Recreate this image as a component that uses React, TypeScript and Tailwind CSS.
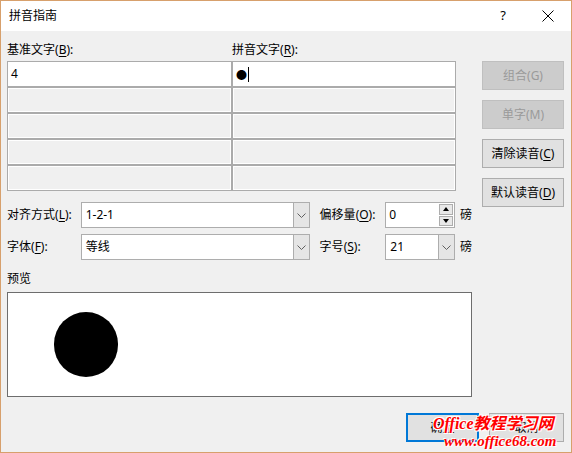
import React from 'react';

const Chevron = () => (
  <svg width="9" height="5" viewBox="0 0 9 5" fill="none">
    <path d="M0.5 0.5 L4.5 4.5 L8.5 0.5" stroke="#606060" strokeWidth="1" />
  </svg>
);

const Key = ({ k }: { k: string }) => (
  <>
    (<span className="underline underline-offset-2">{k}</span>)
  </>
);

const ComboBox = ({ value, width }: { value: string; width: string }) => (
  <div className={`${width} h-[26px] flex border border-[#adadad] bg-white`}>
    <div className="flex-1 pl-[4px] flex items-center">{value}</div>
    <div className="w-[16px] bg-[#e5e5e5] border-l border-[#adadad] flex items-center justify-center">
      <Chevron />
    </div>
  </div>
);

const SideButton = ({ children, disabled }: { children: React.ReactNode; disabled?: boolean }) => (
  <button
    className={`w-[82px] h-[29px] border flex items-center justify-center ${
      disabled ? 'bg-[#cccccc] border-[#bfbfbf] text-[#9a9a9a]' : 'bg-[#e1e1e1] border-[#adadad] text-black'
    }`}
  >
    {children}
  </button>
);

const App = () => {
  const emptyRows = [1, 2, 3, 4];

  return (
    <div className="relative w-[572px] h-[453px] border border-[#d7a06c] flex flex-col text-[12px] text-black font-['Noto_Sans','Noto_Sans_CJK_SC',sans-serif] overflow-hidden">
      {/* title bar */}
      <div className="h-[30px] bg-white flex items-center shrink-0">
        <span className="pl-[8px] flex-1">拼音指南</span>
        <span className="text-[13px] mr-[36px]">?</span>
        <svg width="12" height="12" viewBox="0 0 12 12" className="mr-[17px]">
          <path d="M0.5 0.5 L11.5 11.5 M11.5 0.5 L0.5 11.5" stroke="#000" strokeWidth="1" />
        </svg>
      </div>

      {/* body */}
      <div className="flex-1 bg-[#f0f0f0] pl-[6px] pr-[7px] flex flex-col">
        <div className="flex">
          <div className="w-[465px] flex flex-col">
            <div className="pt-[10px] h-[26px] grid grid-cols-[225px_1fr] items-center">
              <span>
                基准文字<Key k="B" />:
              </span>
              <span>
                拼音文字<Key k="R" />:
              </span>
            </div>

            <div className="mt-[4px] w-[449px] grid grid-cols-[223px_222px] gap-[2px] p-[1px] bg-[#ababab]">
              <div className="h-[24px] bg-white flex items-center pl-[3px]">4</div>
              <div className="h-[24px] bg-white flex items-center pl-[3px]">
                <span className="text-[11px] leading-none">●</span>
                <span className="ml-[1px] w-px h-[15px] bg-black" />
              </div>
              {emptyRows.map(r => (
                <React.Fragment key={r}>
                  <div className="h-[24px] bg-[#f0f0f0] border border-white" />
                  <div className="h-[24px] bg-[#f0f0f0] border border-white" />
                </React.Fragment>
              ))}
            </div>

            <div className="mt-[11px] flex items-center">
              <span className="w-[74px]">
                对齐方式<Key k="L" />:
              </span>
              <ComboBox value="1-2-1" width="w-[230px]" />
              <span className="ml-[10px] w-[66px]">
                偏移量<Key k="O" />:
              </span>
              <div className="w-[70px] h-[26px] flex border border-[#adadad] bg-white">
                <div className="flex-1 pl-[3px] flex items-center">0</div>
                <div className="w-[16px] flex flex-col p-[1px] gap-[1px]">
                  <div className="flex-1 bg-[#e8e8e8] border border-[#adadad] flex items-center justify-center">
                    <svg width="6" height="4" viewBox="0 0 6 4">
                      <path d="M0 4 L3 0 L6 4 Z" fill="#000" />
                    </svg>
                  </div>
                  <div className="flex-1 bg-[#e8e8e8] border border-[#adadad] flex items-center justify-center">
                    <svg width="6" height="4" viewBox="0 0 6 4">
                      <path d="M0 0 L3 4 L6 0 Z" fill="#000" />
                    </svg>
                  </div>
                </div>
              </div>
              <span className="ml-[5px]">磅</span>
            </div>

            <div className="mt-[6px] flex items-center">
              <span className="w-[74px]">
                字体<Key k="F" />:
              </span>
              <ComboBox value="等线" width="w-[230px]" />
              <span className="ml-[10px] w-[66px]">
                字号<Key k="S" />:
              </span>
              <ComboBox value="21" width="w-[70px]" />
              <span className="ml-[5px]">磅</span>
            </div>

            <div className="mt-[11px] h-[16px] flex items-center">预览</div>

            <div className="mt-[5px] h-[105px] bg-white border border-[#6d6d6d] flex items-center pl-[46px]">
              <div className="w-[64px] h-[65px] rounded-full bg-black" />
            </div>
          </div>

          <div className="ml-[10px] pt-[30px] flex flex-col gap-[10px]">
            <SideButton disabled>
              组合(G)
            </SideButton>
            <SideButton disabled>
              单字(M)
            </SideButton>
            <SideButton>
              清除读音<Key k="C" />
            </SideButton>
            <SideButton>
              默认读音<Key k="D" />
            </SideButton>
          </div>
        </div>

        <div className="mt-[16px] flex justify-end gap-[10px]">
          <button className="w-[73px] h-[29px] bg-[#e1e1e1] border-2 border-[#0078d7]">确定</button>
          <button className="w-[75px] h-[29px] bg-[#e1e1e1] border border-[#adadad]">取消</button>
        </div>
      </div>

      {/* watermark overlay */}
      <div className="absolute left-[432px] top-[414px] flex flex-col items-start pointer-events-none">
        <span className="text-[16px] leading-[18px] font-bold italic text-[#ff0000] font-['Liberation_Serif','Noto_Sans_CJK_SC',serif] [text-shadow:1px_1px_0_#fff,-1px_-1px_0_#fff,1px_-1px_0_#fff,-1px_1px_0_#fff]">
          Office教程学习网
        </span>
        <span className="ml-[11px] text-[15px] leading-[16px] font-bold italic text-[#ff0000] font-['Liberation_Serif',serif] [text-shadow:1px_1px_0_#fff,-1px_-1px_0_#fff]">
          www.office68.com
        </span>
      </div>
    </div>
  );
};

export default App;
